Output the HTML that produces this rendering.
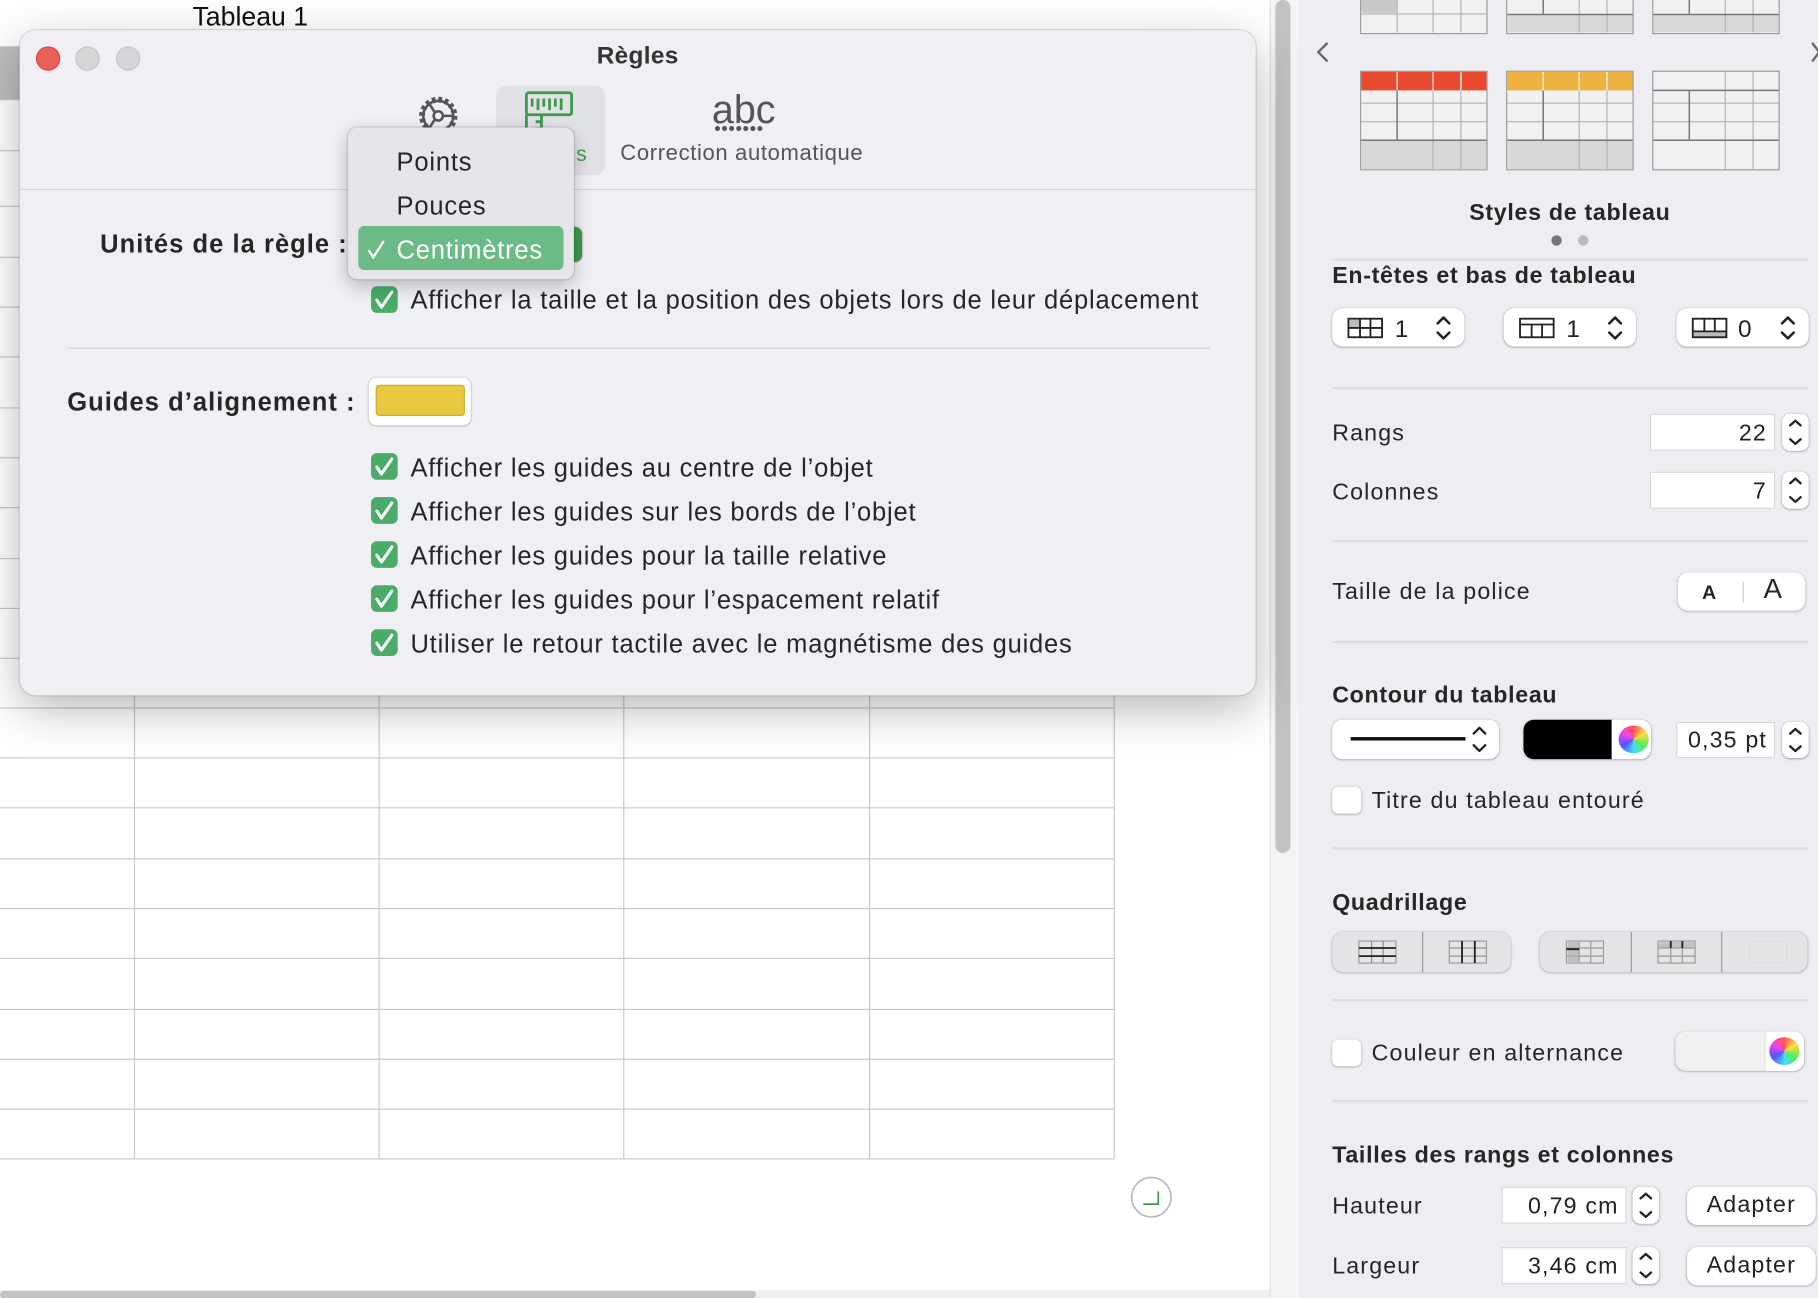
<!DOCTYPE html>
<html><head><meta charset="utf-8"><style>
*{box-sizing:border-box;margin:0;padding:0}
html,body{width:1818px;height:1298px;overflow:hidden;background:#fff;font-family:"Liberation Sans",sans-serif}
#f{position:absolute;left:0;top:0;width:1568px;height:1120px;transform:scale(1.15944,1.15893);transform-origin:0 0;background:#fff}
.a{position:absolute}
.t{position:absolute;white-space:nowrap;color:#222}
.sb .t{font-size:20px;color:#262626;letter-spacing:1px}
.sb .h{letter-spacing:0.6px}
.h{font-weight:bold;color:#2a2a2a}
.sep{position:absolute;height:2px;background:#dcdce1}
.box{position:absolute;background:#fff;border-radius:9px;box-shadow:0 0.5px 2px rgba(0,0,0,.3)}
.fld{position:absolute;background:#fff;border:1px solid #d8d8d8;font-size:20px;text-align:right;padding-right:6px;color:#222;letter-spacing:1px}
.stp{position:absolute;width:23px;background:#fff;border-radius:7px;box-shadow:0 0.5px 2px rgba(0,0,0,.35)}
.cb{position:absolute;width:23px;height:23px;border-radius:5px;background:#4bac69}
.cb svg{position:absolute;left:0;top:0}
.cbe{position:absolute;width:25px;height:23px;border-radius:5px;background:#fff;box-shadow:0 0.5px 2px rgba(0,0,0,.3)}
.dl .t{font-size:22px;color:#262626;letter-spacing:0.7px}
.dl .h{letter-spacing:0.9px}
</style></head><body><div id="f">
<div class="a" style="left:0;top:40px;width:17px;height:46px;background:#bfbfbf"></div>
<svg class="a" style="left:0;top:0" width="1095" height="1120">
<g stroke="#c8c8c8" stroke-width="1">
<line x1="0" y1="86" x2="17" y2="86"/><line x1="0" y1="130" x2="17" y2="130"/><line x1="0" y1="178" x2="17" y2="178"/><line x1="0" y1="222" x2="17" y2="222"/><line x1="0" y1="265" x2="17" y2="265"/><line x1="0" y1="308" x2="17" y2="308"/><line x1="0" y1="352" x2="17" y2="352"/><line x1="0" y1="395" x2="17" y2="395"/><line x1="0" y1="438" x2="17" y2="438"/><line x1="0" y1="482" x2="17" y2="482"/><line x1="0" y1="525" x2="17" y2="525"/><line x1="0" y1="568" x2="17" y2="568"/>
<line x1="0" y1="654" x2="961" y2="654"/><line x1="0" y1="697" x2="961" y2="697"/><line x1="0" y1="741" x2="961" y2="741"/><line x1="0" y1="784" x2="961" y2="784"/><line x1="0" y1="827" x2="961" y2="827"/><line x1="0" y1="871" x2="961" y2="871"/><line x1="0" y1="914" x2="961" y2="914"/><line x1="0" y1="957" x2="961" y2="957"/><line x1="0" y1="1000" x2="961" y2="1000"/><line x1="0" y1="611" x2="961" y2="611"/>
<line x1="116" y1="590" x2="116" y2="1000"/><line x1="327" y1="590" x2="327" y2="1000"/><line x1="538" y1="590" x2="538" y2="1000"/><line x1="750" y1="590" x2="750" y2="1000"/><line x1="961" y1="590" x2="961" y2="1000"/>
</g>
<circle cx="993" cy="1033" r="17" fill="#fff" stroke="#bbb" stroke-width="1.5"/>
<path d="M986 1039h13v-11" stroke="#3a9a50" stroke-width="1.5" fill="none"/>
</svg>
<div class="t" style="left:166px;top:1px;font-size:23px;color:#111">Tableau 1</div>
<div class="a" style="left:1095px;top:0;width:25px;height:1120px;background:#f4f4f4;border-left:1px solid #e0e0e0"></div>
<div class="a" style="left:1100px;top:0;width:13px;height:736px;border-radius:7px;background:#c2c2c2"></div>
<div class="a" style="left:0;top:1113px;width:1095px;height:7px;background:#efefef"></div>
<div class="a" style="left:0;top:1114px;width:652px;height:6px;border-radius:3px;background:#c2c2c2"></div>

<div class="a sb" style="left:1120px;top:0;width:448px;height:1120px;background:#ededf2">
<svg class="a" style="left:0;top:0" width="448" height="160">
<g fill="#f1f1f1" stroke="#9a9a9a" stroke-width="1">
<rect x="53.5" y="-2" width="109" height="31"/><rect x="179.5" y="-2" width="109" height="31"/><rect x="305.5" y="-2" width="109" height="31"/>
<rect x="53.5" y="61.5" width="109" height="85"/><rect x="179.5" y="61.5" width="109" height="85"/><rect x="305.5" y="61.5" width="109" height="85"/>
</g>
<rect x="54" y="0" width="31" height="11" fill="#c8c8c8"/>
<rect x="180" y="13" width="108" height="15" fill="#d9d9d9"/><rect x="306" y="13" width="108" height="15" fill="#d9d9d9"/>
<rect x="54" y="62" width="108" height="16" fill="#e84a30"/><rect x="180" y="62" width="108" height="16" fill="#eeb242"/>
<rect x="54" y="121" width="108" height="25" fill="#d8d8d8"/><rect x="180" y="121" width="108" height="25" fill="#d8d8d8"/>
<g stroke="#b0b0b0" stroke-width="1">
<line x1="54" y1="12" x2="162" y2="12"/><line x1="85" y1="0" x2="85" y2="28"/><line x1="116" y1="0" x2="116" y2="28"/><line x1="140" y1="0" x2="140" y2="28"/>
<line x1="242" y1="0" x2="242" y2="28"/><line x1="266" y1="0" x2="266" y2="28"/>
<line x1="368" y1="0" x2="368" y2="28"/><line x1="392" y1="0" x2="392" y2="28"/>
<line x1="54" y1="89" x2="162" y2="89"/><line x1="54" y1="105" x2="162" y2="105"/>
<line x1="180" y1="89" x2="288" y2="89"/><line x1="180" y1="105" x2="288" y2="105"/>
<line x1="306" y1="89" x2="414" y2="89"/><line x1="306" y1="105" x2="414" y2="105"/>
<line x1="116" y1="62" x2="116" y2="146"/><line x1="140" y1="62" x2="140" y2="146"/>
<line x1="242" y1="62" x2="242" y2="146"/><line x1="266" y1="62" x2="266" y2="146"/>
<line x1="368" y1="62" x2="368" y2="146"/><line x1="392" y1="62" x2="392" y2="146"/>
</g>
<g stroke="#777" stroke-width="1.3">
<line x1="211" y1="0" x2="211" y2="12"/><line x1="337" y1="0" x2="337" y2="12"/><line x1="180" y1="12.5" x2="288" y2="12.5"/><line x1="306" y1="12.5" x2="414" y2="12.5"/>
<line x1="85" y1="78" x2="85" y2="121"/><line x1="211" y1="78" x2="211" y2="121"/><line x1="337" y1="78" x2="337" y2="121"/>
<line x1="54" y1="121" x2="162" y2="121"/><line x1="180" y1="121" x2="288" y2="121"/><line x1="306" y1="121" x2="414" y2="121"/>
<line x1="306" y1="78" x2="414" y2="78"/>
</g>
<g stroke="#fff"><line x1="85" y1="62" x2="85" y2="78"/><line x1="116" y1="62" x2="116" y2="78"/><line x1="140" y1="62" x2="140" y2="78"/><line x1="211" y1="62" x2="211" y2="78"/><line x1="242" y1="62" x2="242" y2="78"/><line x1="266" y1="62" x2="266" y2="78"/></g>
<path d="M25 37l-8 8 8 8" stroke="#666" stroke-width="2" fill="none"/>
<path d="M443 37l6 8-6 8" stroke="#666" stroke-width="2" fill="none"/>
</svg>
<div class="t h" style="left:0;width:468px;text-align:center;top:173px">Styles de tableau</div>
<div class="a" style="left:218px;top:203px;width:9px;height:9px;border-radius:5px;background:#777"></div>
<div class="a" style="left:241px;top:203px;width:9px;height:9px;border-radius:5px;background:#bbb"></div>
<div class="sep" style="left:29px;top:223px;width:411px"></div>
<div class="t h" style="left:29px;top:227px">En-têtes et bas de tableau</div>
<div class="box" style="left:29px;top:266px;width:114px;height:33px"></div>
<div class="box" style="left:177px;top:266px;width:114px;height:33px"></div>
<div class="box" style="left:326px;top:266px;width:114px;height:33px"></div>
<svg class="a" style="left:0;top:266px" width="448" height="34">
<rect x="44" y="10" width="9" height="7" fill="#bbb"/><rect x="341" y="21" width="28" height="4" fill="#bbb"/>
<g stroke="#222" stroke-width="1.6" fill="none">
<rect x="43" y="9" width="29" height="16"/><line x1="43" y1="17" x2="72" y2="17"/><line x1="53" y1="9" x2="53" y2="25"/><line x1="62" y1="9" x2="62" y2="25"/>
<rect x="191" y="9" width="29" height="16"/><line x1="191" y1="14" x2="220" y2="14"/><line x1="201" y1="14" x2="201" y2="25"/><line x1="210" y1="14" x2="210" y2="25"/>
<rect x="340" y="9" width="29" height="16"/><line x1="340" y1="20" x2="369" y2="20"/><line x1="350" y1="9" x2="350" y2="20"/><line x1="359" y1="9" x2="359" y2="20"/>
</g>
<g stroke="#222" stroke-width="2.2" fill="none" stroke-linecap="round" stroke-linejoin="round">
<path d="M120 13l5-5 5 5M120 21l5 5 5-5M268 13l5-5 5 5M268 21l5 5 5-5M417 13l5-5 5 5M417 21l5 5 5-5"/>
</g>
<text x="83" y="25" font-size="21" fill="#222" font-family="Liberation Sans">1</text>
<text x="231" y="25" font-size="21" fill="#222" font-family="Liberation Sans">1</text>
<text x="379" y="25" font-size="21" fill="#222" font-family="Liberation Sans">0</text>
</svg>
<div class="sep" style="left:29px;top:334px;width:411px"></div>
<div class="t" style="left:29px;top:363px">Rangs</div>
<div class="fld" style="left:303px;top:357px;width:108px;height:32px;line-height:32px">22</div>
<div class="stp" style="left:417px;top:357px;height:32px"></div>
<div class="t" style="left:29px;top:414px">Colonnes</div>
<div class="fld" style="left:303px;top:407px;width:108px;height:32px;line-height:32px">7</div>
<div class="stp" style="left:417px;top:407px;height:32px"></div>
<div class="sep" style="left:29px;top:466px;width:411px"></div>
<div class="t" style="left:29px;top:500px">Taille de la police</div>
<div class="box" style="left:327px;top:494px;width:110px;height:33px"></div>
<div class="a" style="left:383px;top:502px;width:1px;height:18px;background:#ccc"></div>
<div class="t" style="left:348px;top:502px;font-size:17px;font-weight:bold">A</div>
<div class="t" style="left:401px;top:495px;font-size:24px">A</div>
<div class="sep" style="left:29px;top:553px;width:411px"></div>
<div class="t h" style="left:29px;top:589px">Contour du tableau</div>
<div class="box" style="left:29px;top:621px;width:144px;height:34px"></div>
<div class="a" style="left:45px;top:636px;width:99px;height:3px;background:#111"></div>
<div class="box" style="left:194px;top:621px;width:110px;height:34px"></div>
<div class="a" style="left:194px;top:621px;width:76px;height:34px;background:#000;border-radius:9px 0 0 9px"></div>
<div class="a" style="left:276px;top:626px;width:26px;height:24px;border-radius:50%;background:conic-gradient(#f55,#fd4,#5e5,#4df,#55f,#e4e,#f55)"></div>
<div class="fld" style="left:326px;top:623px;width:85px;height:31px;line-height:31px">0,35 pt</div>
<div class="stp" style="left:417px;top:623px;height:31px"></div>
<div class="cbe" style="left:29px;top:679px"></div>
<div class="t" style="left:63px;top:680px">Titre du tableau entouré</div>
<div class="sep" style="left:29px;top:731px;width:411px"></div>
<div class="t h" style="left:29px;top:768px">Quadrillage</div>
<div class="a" style="left:29px;top:804px;width:154px;height:35px;border-radius:10px;background:#e4e4e6;box-shadow:0 .5px 2px rgba(0,0,0,.3)"></div>
<div class="a" style="left:208px;top:804px;width:231px;height:35px;border-radius:10px;background:#e4e4e6;box-shadow:0 .5px 2px rgba(0,0,0,.3)"></div>
<svg class="a" style="left:0;top:804px" width="448" height="35"><g fill="none" stroke="#999">
<line x1="107" y1="0" x2="107" y2="35"/><line x1="287" y1="0" x2="287" y2="35"/><line x1="365" y1="0" x2="365" y2="35"/>
<rect x="52" y="8" width="32" height="19"/><rect x="130" y="8" width="32" height="19"/><rect x="231" y="8" width="32" height="19"/><rect x="310" y="8" width="32" height="19"/>
<path d="M130 14h32M130 21h32M141 8v19M152 8v19M231 14h32M231 21h32M242 8v19M252 8v19M310 14h32M310 21h32M321 8v19M331 8v19"/>
<path d="M63 8v19M73 8v19" stroke="#888"/>
<rect x="389" y="8" width="32" height="19" stroke="#ddd"/></g>
<rect x="232" y="9" width="10" height="17" fill="#aaa" opacity=".6"/><rect x="311" y="9" width="30" height="5" fill="#aaa" opacity=".6"/>
<g stroke="#222" stroke-width="1.6"><path d="M52 14h32M52 21h32M141 8v19M152 8v19M231 15h11M321 8v6M331 8v6"/></g>
</svg>
<div class="sep" style="left:29px;top:862px;width:411px"></div>
<div class="cbe" style="left:29px;top:897px"></div>
<div class="t" style="left:63px;top:898px">Couleur en alternance</div>
<div class="a" style="left:325px;top:890px;width:111px;height:34px;border-radius:9px;background:#f0f0f0;box-shadow:0 .5px 2px rgba(0,0,0,.3)"></div>
<div class="a" style="left:402px;top:890px;width:34px;height:34px;border-radius:0 9px 9px 0;background:#fff;border-left:1px solid #ddd"></div>
<div class="a" style="left:406px;top:895px;width:26px;height:24px;border-radius:50%;background:conic-gradient(#f55,#fd4,#5e5,#4df,#55f,#e4e,#f55)"></div>
<div class="sep" style="left:29px;top:949px;width:411px"></div>
<div class="t h" style="left:29px;top:986px">Tailles des rangs et colonnes</div>
<div class="t" style="left:29px;top:1030px">Hauteur</div>
<div class="fld" style="left:175px;top:1024px;width:108px;height:32px;line-height:32px">0,79 cm</div>
<div class="stp" style="left:288px;top:1024px;height:32px"></div>
<div class="box" style="left:335px;top:1024px;width:111px;height:33px;text-align:center;line-height:33px;font-size:20px;color:#222;letter-spacing:1px">Adapter</div>
<div class="t" style="left:29px;top:1082px">Largeur</div>
<div class="fld" style="left:175px;top:1076px;width:108px;height:32px;line-height:32px">3,46 cm</div>
<div class="stp" style="left:288px;top:1076px;height:32px"></div>
<div class="box" style="left:335px;top:1076px;width:111px;height:33px;text-align:center;line-height:33px;font-size:20px;color:#222;letter-spacing:1px">Adapter</div>
<svg class="a" style="left:0;top:0" width="448" height="1120"><g stroke="#222" stroke-width="2" fill="none" stroke-linecap="round" stroke-linejoin="round">
<path d="M424 367l4.5-4 4.5 4M424 379l4.5 4 4.5-4M424 417l4.5-4 4.5 4M424 429l4.5 4 4.5-4M424 633l4.5-4 4.5 4M424 644l4.5 4 4.5-4"/>
<path d="M295 1034l4.5-4 4.5 4M295 1046l4.5 4 4.5-4M295 1086l4.5-4 4.5 4M295 1098l4.5 4 4.5-4"/>
<path d="M151 633l5-5 5 5M151 643l5 5 5-5"/>
</g></svg>
</div>

<div class="a dl" style="left:17px;top:26px;width:1066px;height:574px;border-radius:14px;background:#efeff4;box-shadow:0 0 0 1px rgba(0,0,0,.12),0 12px 40px rgba(0,0,0,.28)">
<div class="a" style="left:0;top:137px;width:1066px;height:1px;background:#d6d6da"></div>
<div class="a" style="left:14px;top:14px;width:21px;height:21px;border-radius:50%;background:#ec5f57;border:1px solid #d44"></div>
<div class="a" style="left:48px;top:14px;width:21px;height:21px;border-radius:50%;background:#d6d6d8;border:1px solid #c4c4c6"></div>
<div class="a" style="left:83px;top:14px;width:21px;height:21px;border-radius:50%;background:#d6d6d8;border:1px solid #c4c4c6"></div>
<div class="t" style="left:0;width:1066px;text-align:center;top:11px;font-size:21px;font-weight:bold;color:#333;letter-spacing:0.3px">Règles</div>
<div class="a" style="left:411px;top:48px;width:94px;height:77px;border-radius:9px;background:#e1e1e6"></div>
<svg class="a" style="left:340px;top:54px" width="50" height="46"><g stroke="#555" stroke-width="2.2" fill="none">
<circle cx="21" cy="20" r="14" stroke-dasharray="3 2.5" stroke-width="5"/><circle cx="21" cy="20" r="13"/><circle cx="21" cy="20" r="4"/><path d="M25 20h10M18 23l-5 8M18 17l-5-8"/></g></svg>
<svg class="a" style="left:432px;top:52px" width="50" height="46"><g stroke="#3c9a4e" stroke-width="2.4" fill="none">
<rect x="5" y="2" width="39" height="19" rx="2"/><path d="M5 21v22M18 21v22M10 7v7M15 7v10M20 7v7M25 7v10M30 7v7M35 7v10M18 27h-5M18 33h-5"/></g></svg>
<div class="t" style="left:480px;top:97px;font-size:18px;color:#3c9a4e">s</div>
<div class="t" style="left:597px;top:50px;font-size:34px;color:#555;letter-spacing:0">abc</div>
<div class="t" style="left:599px;top:77px;font-size:16px;color:#555;letter-spacing:0.5px">•••••••</div>
<div class="t" style="left:518px;top:96px;font-size:19px;color:#555;letter-spacing:0.55px">Correction automatique</div>
<div class="t h" style="left:0;width:283px;text-align:right;top:172px">Unités de la règle :</div>
<div class="a" style="left:463px;top:170px;width:22px;height:30px;border-radius:6px;background:#3c9a4e;box-shadow:0 0 0 1px #ccc"></div>
<div class="cb" style="left:303px;top:221px"><svg width="23" height="23"><path d="M5 12l4 6 9-13" stroke="#fff" stroke-width="2.6" fill="none" stroke-linecap="round" stroke-linejoin="round"/></svg></div>
<div class="t" style="left:337px;top:220px">Afficher la taille et la position des objets lors de leur déplacement</div>
<div class="a" style="left:41px;top:274px;width:985px;height:1px;background:#d2d2d6"></div>
<div class="t h" style="left:41px;top:308px">Guides d’alignement :</div>
<div class="a" style="left:301px;top:300px;width:88px;height:41px;border-radius:7px;background:#fff;box-shadow:0 .5px 2px rgba(0,0,0,.3)"></div>
<div class="a" style="left:307px;top:306px;width:77px;height:27px;border-radius:3px;background:#e7c83f;border:1px solid #c9ab30"></div>
<div class="cb" style="left:303px;top:365px"><svg width="23" height="23"><path d="M5 12l4 6 9-13" stroke="#fff" stroke-width="2.6" fill="none" stroke-linecap="round" stroke-linejoin="round"/></svg></div><div class="t" style="left:337px;top:365px">Afficher les guides au centre de l’objet</div>
<div class="cb" style="left:303px;top:403px"><svg width="23" height="23"><path d="M5 12l4 6 9-13" stroke="#fff" stroke-width="2.6" fill="none" stroke-linecap="round" stroke-linejoin="round"/></svg></div><div class="t" style="left:337px;top:403px">Afficher les guides sur les bords de l’objet</div>
<div class="cb" style="left:303px;top:441px"><svg width="23" height="23"><path d="M5 12l4 6 9-13" stroke="#fff" stroke-width="2.6" fill="none" stroke-linecap="round" stroke-linejoin="round"/></svg></div><div class="t" style="left:337px;top:441px">Afficher les guides pour la taille relative</div>
<div class="cb" style="left:303px;top:479px"><svg width="23" height="23"><path d="M5 12l4 6 9-13" stroke="#fff" stroke-width="2.6" fill="none" stroke-linecap="round" stroke-linejoin="round"/></svg></div><div class="t" style="left:337px;top:479px">Afficher les guides pour l’espacement relatif</div>
<div class="cb" style="left:303px;top:517px"><svg width="23" height="23"><path d="M5 12l4 6 9-13" stroke="#fff" stroke-width="2.6" fill="none" stroke-linecap="round" stroke-linejoin="round"/></svg></div><div class="t" style="left:337px;top:517px">Utiliser le retour tactile avec le magnétisme des guides</div>
</div>

<div class="a dl" style="left:300px;top:110px;width:195px;height:131px;border-radius:8px;background:#e5e5ea;box-shadow:0 0 0 1px rgba(0,0,0,.12),0 6px 16px rgba(0,0,0,.22)">
<div class="t" style="left:42px;top:17px">Points</div>
<div class="t" style="left:42px;top:55px">Pouces</div>
<div class="a" style="left:9px;top:85px;width:177px;height:38px;border-radius:5px;background:#6cbb86"></div>
<svg class="a" style="left:15px;top:95px" width="20" height="20"><path d="M3 11l4 6 9-14" stroke="#fff" stroke-width="2" fill="none"/></svg>
<div class="t" style="left:42px;top:93px;color:#fff">Centimètres</div>
</div>
</div></body></html>
